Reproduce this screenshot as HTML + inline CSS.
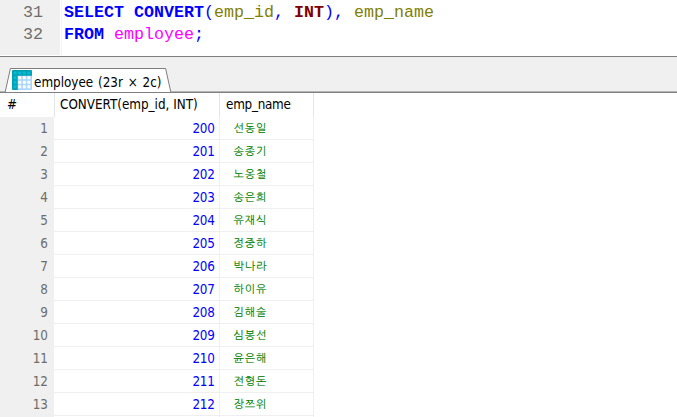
<!DOCTYPE html>
<html><head><meta charset="utf-8">
<style>
html,body{margin:0;padding:0;}
body{width:677px;height:417px;overflow:hidden;background:#fff;position:relative;font-family:"Liberation Sans","NanumGothic",sans-serif;}
.abs{position:absolute;}
.code{font-family:"Liberation Mono",monospace;font-size:16.67px;line-height:22px;white-space:pre;}
.gut{left:0;top:0;width:60px;height:55px;background:#f0f0f0;}
.ln{color:#6e6e6e;left:23px;}
.kw{color:#0000ff;font-weight:bold;}
.sym{color:#0000ff;}
.id{color:#808000;}
.ty{color:#800000;font-weight:bold;}
.tb{color:#ff00ff;}
.panel{left:0;top:56px;width:677px;height:36px;background:#f0f0f0;border-top:1px solid #828282;}
.grid{font-size:13.33px;color:#000;font-family:"DejaVu Sans Condensed","Liberation Sans",sans-serif;white-space:pre;}
.hdr{top:93px;height:23px;line-height:23px;}
.row{left:0;width:677px;height:23px;line-height:23px;}
.row{font-size:13.33px;font-family:"DejaVu Sans Condensed","Liberation Sans",sans-serif;border-bottom:1px solid transparent;}
.row::after{content:"";position:absolute;left:54px;top:22px;width:260px;height:1px;background:#efefef;}
.num{color:#6d6d6d;right:629px;}
.v{color:#0000ff;right:462.5px;letter-spacing:-0.3px;}
.k{color:#008000;left:233.6px;font-size:11px;letter-spacing:0.9px;-webkit-text-stroke:0.1px #008000;font-family:"Liberation Sans","NanumGothic",sans-serif;}
</style></head><body>
<div class="abs gut"></div>
<div class="abs" style="left:61px;top:0;width:1px;height:55px;background:#f3f3f3"></div>
<div class="abs code ln" style="top:2px">31</div>
<div class="abs code ln" style="top:24px">32</div>
<div class="abs code" style="left:64px;top:2px"><span class="kw">SELECT CONVERT</span><span class="sym">(</span><span class="id">emp_id</span><span class="sym">,</span> <span class="ty">INT</span><span class="sym">),</span> <span class="id">emp_name</span></div>
<div class="abs code" style="left:64px;top:24px"><span class="kw">FROM</span> <span class="tb">employee</span><span class="sym">;</span></div>
<div class="abs" style="left:0;top:56px;width:677px;height:1px;background:#808080"></div>
<div class="abs" style="left:0;top:57px;width:677px;height:1px;background:#ececec"></div>
<div class="abs" style="left:0;top:58px;width:677px;height:34px;background:#f0f0f0"></div>
<svg class="abs" style="left:0;top:57px" width="677" height="37" viewBox="0 0 677 37">
  <rect x="0" y="34" width="5" height="1" fill="#b4b4b4"/>
  <rect x="171" y="34" width="506" height="1" fill="#b4b4b4"/>
  <path d="M5.2 35 L10.4 11.5 H165.6 L170.8 35 Z" fill="#fff"/>
  <path d="M5.2 35 L10.4 11.5 H165.6 L170.8 35" fill="none" stroke="#7e7e7e" stroke-width="1"/>
  <rect x="0" y="35" width="677" height="1" fill="#808080"/>
</svg>
<svg class="abs" style="left:12px;top:70px" width="20" height="20" viewBox="0 0 20 20">
  <rect x="0" y="0" width="20" height="20" rx="1.2" fill="#acd5fc"/>
  <path d="M0 1.2 Q0 0 1.2 0 H18.8 Q20 0 20 1.2 V5.7 H5.7 V20 H1.2 Q0 20 0 18.8 Z" fill="#009fb4"/>
  <rect x="1.6" y="1.6" width="3.0" height="2.8" fill="#00bcd4"/><rect x="6.2" y="1.6" width="3.0" height="2.8" fill="#00bcd4"/><rect x="10.8" y="1.6" width="3.0" height="2.8" fill="#00bcd4"/><rect x="15.3" y="1.6" width="3.0" height="2.8" fill="#00bcd4"/><rect x="1.6" y="6.2" width="2.8" height="3.0" fill="#00bcd4"/><rect x="1.6" y="10.8" width="2.8" height="3.0" fill="#00bcd4"/><rect x="1.6" y="15.3" width="2.8" height="3.0" fill="#00bcd4"/><rect x="6.2" y="6.2" width="3.0" height="3.0" fill="#ffffff"/><rect x="6.2" y="10.8" width="3.0" height="3.0" fill="#ffffff"/><rect x="6.2" y="15.3" width="3.0" height="3.0" fill="#ffffff"/><rect x="10.8" y="6.2" width="3.0" height="3.0" fill="#ffffff"/><rect x="10.8" y="10.8" width="3.0" height="3.0" fill="#ffffff"/><rect x="10.8" y="15.3" width="3.0" height="3.0" fill="#ffffff"/><rect x="15.3" y="6.2" width="3.0" height="3.0" fill="#ffffff"/><rect x="15.3" y="10.8" width="3.0" height="3.0" fill="#ffffff"/><rect x="15.3" y="15.3" width="3.0" height="3.0" fill="#ffffff"/>
</svg>
<div class="abs grid" style="left:34px;top:74px;line-height:18px;word-spacing:1px">employee (23r × 2c)</div>
<div class="abs" style="left:0;top:117px;width:54px;height:300px;background:#f0f0f0"></div>
<div class="abs" style="left:54px;top:93px;width:1px;height:24px;background:#e5e5e5"></div>
<div class="abs" style="left:219px;top:93px;width:1px;height:24px;background:#e5e5e5"></div>
<div class="abs" style="left:313px;top:93px;width:1px;height:24px;background:#e5e5e5"></div>
<div class="abs" style="left:219px;top:117px;width:1px;height:300px;background:#efefef"></div>
<div class="abs" style="left:313px;top:117px;width:1px;height:300px;background:#efefef"></div>
<div class="abs grid" style="left:7px;top:93px;line-height:23px">#</div>
<div class="abs grid" style="left:60px;top:93px;line-height:23px">CONVERT(emp_id, INT)</div>
<div class="abs grid" style="left:226px;top:93px;line-height:23px;letter-spacing:-0.25px">emp_name</div>
<div class="abs row" style="top:117px"><span class="abs num">1</span><span class="abs v">200</span><span class="abs k">선동일</span></div>
<div class="abs row" style="top:140px"><span class="abs num">2</span><span class="abs v">201</span><span class="abs k">송종기</span></div>
<div class="abs row" style="top:163px"><span class="abs num">3</span><span class="abs v">202</span><span class="abs k">노옹철</span></div>
<div class="abs row" style="top:186px"><span class="abs num">4</span><span class="abs v">203</span><span class="abs k">송은희</span></div>
<div class="abs row" style="top:209px"><span class="abs num">5</span><span class="abs v">204</span><span class="abs k">유재식</span></div>
<div class="abs row" style="top:232px"><span class="abs num">6</span><span class="abs v">205</span><span class="abs k">정중하</span></div>
<div class="abs row" style="top:255px"><span class="abs num">7</span><span class="abs v">206</span><span class="abs k">박나라</span></div>
<div class="abs row" style="top:278px"><span class="abs num">8</span><span class="abs v">207</span><span class="abs k">하이유</span></div>
<div class="abs row" style="top:301px"><span class="abs num">9</span><span class="abs v">208</span><span class="abs k">김해술</span></div>
<div class="abs row" style="top:324px"><span class="abs num">10</span><span class="abs v">209</span><span class="abs k">심봉선</span></div>
<div class="abs row" style="top:347px"><span class="abs num">11</span><span class="abs v">210</span><span class="abs k">윤은해</span></div>
<div class="abs row" style="top:370px"><span class="abs num">12</span><span class="abs v">211</span><span class="abs k">전형돈</span></div>
<div class="abs row" style="top:393px"><span class="abs num">13</span><span class="abs v">212</span><span class="abs k">장쯔위</span></div>
</body></html>
